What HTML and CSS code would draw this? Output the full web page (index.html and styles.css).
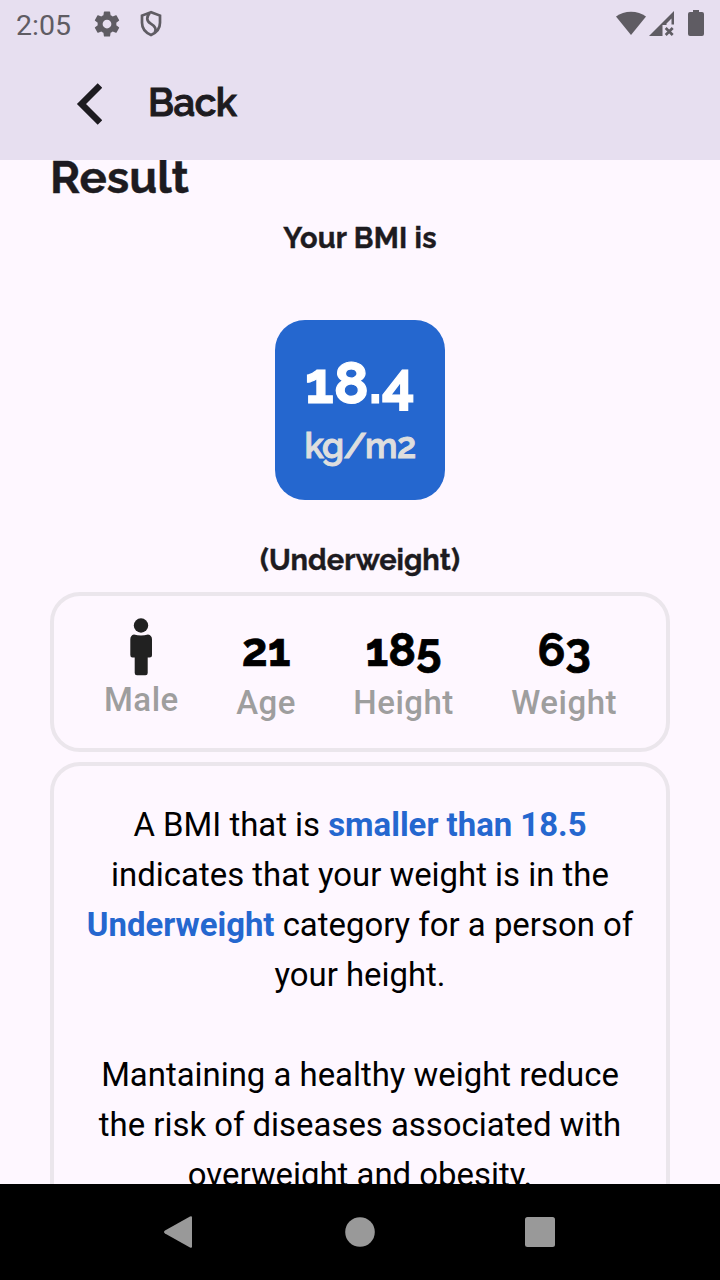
FILE: index.html
```html
<!DOCTYPE html>
<html lang="en">
<head>
<meta charset="utf-8">
<title>BMI Result</title>
<link rel="stylesheet" href="styles.css">
</head>
<body>
<div class="screen">
  <header class="header">
    <div class="status">
      <span class="clock">2:05</span>
      <svg class="gear" width="30" height="30" viewBox="0 0 24 24"><path d="M19.43 12.98c.04-.32.07-.64.07-.98s-.03-.66-.07-.98l2.11-1.65c.19-.15.24-.42.12-.64l-2-3.46c-.12-.22-.39-.3-.61-.22l-2.49 1c-.52-.4-1.08-.73-1.69-.98l-.38-2.65C14.46 2.18 14.25 2 14 2h-4c-.25 0-.46.18-.49.42l-.38 2.65c-.61.25-1.17.59-1.69.98l-2.49-1c-.23-.09-.49 0-.61.22l-2 3.46c-.13.22-.07.49.12.64l2.11 1.65c-.04.32-.07.65-.07.98s.03.66.07.98l-2.11 1.65c-.19.15-.24.42-.12.64l2 3.46c.12.22.39.3.61.22l2.490-1c.52.4 1.080.73 1.690.98l.38 2.650c.03.24.24.42.49.42h4c.25 0 .46-.18.49-.42l.38-2.650c.61-.25 1.170-.59 1.690-.98l2.490 1c.23.09.49 0 .61-.22l2-3.460c.12-.22.07-.49-.12-.64zM12 15.500a3.500 3.500 0 1 1 0-7 3.500 3.500 0 0 1 0 7z"/></svg>
      <svg class="shield" width="24" height="28" viewBox="0 0 24 28"><path d="M12 2.300 3 5.600v7.200c0 5.700 3.800 10 9 12.200 5.200-2.200 9-6.500 9-12.200V5.600zM10.700 3.200c-3.500 4-3.300 7.700.7 10.200 5 3 6.300 5.800 4.300 9"/></svg>
      <svg class="signals" width="92" height="30" viewBox="0 0 92 30">
        <path d="M2 7.500C10 1 24 1 32 7.500L17 26z"/>
        <path d="M35 27 60 2V15.500H57.500V9.500L52.500 14.500V16H48.500V27z"/>
        <path class="cross" d="m51.700 19 7 7m0-7-7 7"/>
        <path d="M74 5q0-2 2-2h3V1h6v2h3q2 0 2 2v20q0 2-2 2H76q-2 0-2-2z"/>
      </svg>
    </div>
    <div class="appbar">
      <svg width="26" height="42" viewBox="0 0 26 42"><path class="chevron" d="M24 2.500 5.500 21 24 39.500"/></svg>
      <span class="back">Back</span>
    </div>
  </header>
  <main class="content">
    <h1 class="title">Result</h1>
    <p class="lead">Your BMI is</p>
    <section class="score">
      <div class="score-value">18.4</div>
      <div class="score-unit">kg/m2</div>
    </section>
    <p class="category">(Underweight)</p>
    <section class="card stats">
      <div class="stat">
        <svg class="person" width="24" height="60" viewBox="0 0 24 60"><circle cx="12" cy="8.500" r="7.200"/><path d="M5 17.500q7 2 14 0 4 .8 4 5V38q0 2.500-2.500 2.500H18.700V56q0 2.300-2.300 2.300H8Q5.700 58.300 5.700 56V40.500H3.500Q1.300 40.500 1.300 38V22.500q0-4.200 3.700-5z"/></svg>
        <span class="label label-male">Male</span>
      </div>
      <div class="stat"><div class="number">21</div><span class="label">Age</span></div>
      <div class="stat"><div class="number">185</div><span class="label">Height</span></div>
      <div class="stat"><div class="number">63</div><span class="label">Weight</span></div>
    </section>
    <section class="card advice">
      <p>A BMI that is <b>smaller than 18.5</b><br>indicates that your weight is in the<br><b>Underweight</b> category for a person of<br>your height.</p>
      <p>Mantaining a healthy weight reduce<br>the risk of diseases associated with<br>overweight and obesity.</p>
    </section>
  </main>
  <nav class="navbar">
    <svg class="nav-back" width="32" height="34" viewBox="0 0 32 34"><path d="M29 1.500Q31 .5 31 2.500V31.500q0 2-2 1L4 18.500q-2-1.500 0-3z"/></svg>
    <svg width="32" height="34" viewBox="0 0 32 34"><circle cx="16" cy="17" r="14.800"/></svg>
    <svg width="32" height="34" viewBox="0 0 32 34"><rect x="1" y="2" width="30" height="30" rx="2.500"/></svg>
  </nav>
</div>
</body>
</html>
```
FILE: styles.css
```css
* { box-sizing: border-box; }
body { margin: 0; }
p, h1 { margin: 0; }
svg { display: block; flex: none; }
.screen { width: 720px; height: 1280px; display: flex; flex-direction: column; overflow: hidden; background: #fef7ff; font-family: Roboto, sans-serif; }
.header { height: 160px; flex: none; background: #e7dff0; }
.status { height: 48px; display: flex; align-items: center; padding: 0 14px 0 16px; color: #5f5c63; fill: #5f5c63; }
.clock { width: 76px; font-size: 28.500px; line-height: 48px; padding-top: 3px; }
.shield { margin-left: 17px; fill: none; stroke: #5f5c63; stroke-width: 2.700; }
.signals { margin-left: auto; }
.cross { fill: none; stroke: #5f5c63; stroke-width: 2.700; }
.appbar { height: 112px; display: flex; align-items: center; padding-left: 76px; }
.chevron { fill: none; stroke: #1d1b20; stroke-width: 6.500; }
.back, .title, .lead, .score, .category, .number { font-family: Raleway, Lato, sans-serif; font-weight: 700; color: #1d1b20; white-space: nowrap; }
.back { margin-left: 46px; margin-top: -2px; font-size: 38.500px; font-weight: 600; line-height: 50px; letter-spacing: -.5px; -webkit-text-stroke: 1px; }
.content { flex: 1; min-height: 0; overflow: hidden; padding: 0 50px; display: flex; flex-direction: column; }
.title { height: 56px; flex: none; margin-top: -11px; font-size: 45.500px; line-height: 56px; -webkit-text-stroke: .4px; }
.lead { height: 67px; flex: none; font-size: 29px; line-height: 67px; text-align: center; letter-spacing: .2px; -webkit-text-stroke: .4px; }
.score { width: 170px; height: 180px; flex: none; margin: 48px auto 0; padding-top: 27px; border-radius: 30px; background: #2567cf; text-align: center; }
.score-value { color: #fff; font-size: 58px; line-height: 72px; -webkit-text-stroke: 1.200px; }
.score-unit { color: #dedede; font-size: 35px; font-weight: 600; line-height: 54px; letter-spacing: -.6px; -webkit-text-stroke: 1px; }
.category { height: 92px; flex: none; padding-top: 40px; font-size: 29px; line-height: 41px; text-align: center; -webkit-text-stroke: .4px; }
.card { border: 4px solid #ebe6ec; border-radius: 30px; flex: none; }
.stats { height: 160px; display: flex; justify-content: space-between; padding: 20px 49px 0 50px; }
.stat { display: flex; flex-direction: column; align-items: center; }
.person { fill: #212121; margin-top: 1px; }
.number { height: 67px; color: #000; font-size: 46px; line-height: 68px; -webkit-text-stroke: .7px; }
.label { color: #9e9e9e; font-size: 33px; font-weight: 500; line-height: 40px; letter-spacing: .5px; }
.label-male { margin-top: 3px; }
.advice { height: 460px; margin-top: 10px; padding-top: 34px; font-size: 32.900px; line-height: 50px; text-align: center; color: #000; white-space: nowrap; }
.advice p + p { margin-top: 50px; }
.advice b { color: #2567cf; font-weight: 700; }
.navbar { height: 96px; flex: none; background: #000; fill: #999; display: flex; align-items: center; justify-content: center; gap: 148px; }
.nav-back { margin-left: -3px; margin-right: 3px; }
```
